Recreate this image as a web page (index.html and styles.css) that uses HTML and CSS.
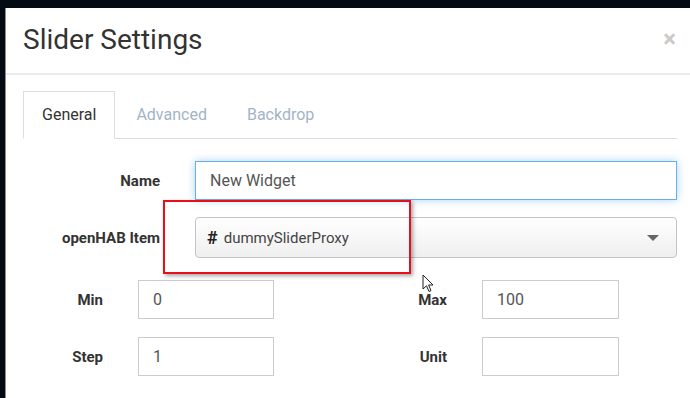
FILE: index.html
```html
<!DOCTYPE html>
<html>
<head>
<meta charset="utf-8">
<link rel="stylesheet" href="styles.css">
</head>
<body>
<div class="modal">
  <div class="modal-header">
    <h2 class="title">Slider Settings</h2>
    <span class="close">×</span>
  </div>
  <div class="modal-body">
    <ul class="tabs">
      <li class="tab active">General</li>
      <li class="tab">Advanced</li>
      <li class="tab">Backdrop</li>
    </ul>
    <div class="form">
      <div class="row">
        <label class="label">Name</label>
        <div class="input focus">New Widget</div>
      </div>
      <div class="row row-select">
        <label class="label">openHAB Item</label>
        <div class="select"><b class="hash">#</b><span>dummySliderProxy</span><i class="caret"></i></div>
      </div>
      <div class="pairs">
        <label class="label">Min</label>
        <div class="input">0</div>
        <label class="label">Max</label>
        <div class="input">100</div>
        <label class="label">Step</label>
        <div class="input">1</div>
        <label class="label">Unit</label>
        <div class="input"></div>
      </div>
    </div>
  </div>
  <div class="highlight"></div>
  <svg class="cursor" width="13" height="19" viewBox="0 0 13 19"><path d="M1 1 L1 15 L4.5 11.8 L7 17.5 L9 16.6 L6.6 11 L11 11 Z" fill="#fff" stroke="#222" stroke-width="1"/></svg>
</div>
</body>
</html>
```
FILE: styles.css
```css
* { box-sizing: border-box; }
html, body { margin: 0; padding: 0; }
body {
  background: #050b14;
  width: 690px;
  height: 398px;
  overflow: hidden;
  font-family: Roboto, "Liberation Sans", sans-serif;
  color: #333;
}
.modal {
  position: relative;
  margin: 8px 0 0 5px;
  height: 400px;
  background: #fff;
  border-left: 1px solid #8a8f96;
}
.modal-header {
  height: 67px;
  display: flex;
  align-items: center;
  justify-content: space-between;
  padding: 0 14px 0 17px;
  border-bottom: 2px solid #ebebeb;
}
.title {
  margin: 0 0 2px 0;
  font-size: 28px;
  font-weight: 400;
  color: #333;
}
.close {
  font-size: 24px;
  font-weight: 700;
  color: #cacaca;
  line-height: 1;
  margin-bottom: 4px;
}
.modal-body {
  padding: 16px 13px 0 17px;
}
.tabs {
  list-style: none;
  margin: 0;
  padding: 0;
  display: flex;
  height: 48px;
  border-bottom: 1px solid #dddddd;
}
.tab {
  padding: 0 18px;
  margin-right: 2px;
  font-size: 16px;
  line-height: 46px;
  color: #a3b4c6;
  border: 1px solid transparent;
  margin-bottom: -1px;
}
.active {
  color: #333;
  background: #fff;
  border-color: #dddddd #dddddd transparent;
}
.form {
  padding-top: 22px;
  display: flex;
  flex-direction: column;
}
.row {
  display: grid;
  grid-template-columns: 137px 1fr;
  column-gap: 35px;
  align-items: center;
}
.row-select { margin-top: 17px; }
.label {
  text-align: right;
  font-size: 15px;
  font-weight: 700;
  color: #333;
}
.input {
  height: 39px;
  border: 1px solid #cccccc;
  padding: 0 14px;
  font-size: 16px;
  line-height: 37px;
  color: #555;
  background: #fff;
}
.focus {
  border-color: #66afe9;
  box-shadow: 0 0 8px rgba(102, 175, 233, 0.55);
}
.select {
  height: 41px;
  display: flex;
  align-items: center;
  padding: 0 11px;
  border: 1px solid #c4c4c4;
  border-radius: 4px;
  background: linear-gradient(#ffffff, #efefef);
  font-size: 15px;
  color: #444;
}
.hash {
  font-size: 18px;
  color: #222;
  margin-right: 6px;
}
.caret {
  margin-left: auto;
  margin-right: 6px;
  width: 0;
  height: 0;
  border-left: 6px solid transparent;
  border-right: 6px solid transparent;
  border-top: 6px solid #666;
}
.pairs {
  margin-top: 22px;
  display: grid;
  grid-template-columns: 80px 136px 138px 137px;
  column-gap: 35px;
  row-gap: 18px;
  align-items: center;
}
.highlight {
  position: absolute;
  left: 157px;
  top: 192px;
  width: 248px;
  height: 74px;
  border: 2px solid #ea0d1a;
  box-shadow: 2px 2px 4px rgba(0, 0, 0, 0.35);
}
.cursor {
  position: absolute;
  left: 416px;
  top: 266px;
}
```
